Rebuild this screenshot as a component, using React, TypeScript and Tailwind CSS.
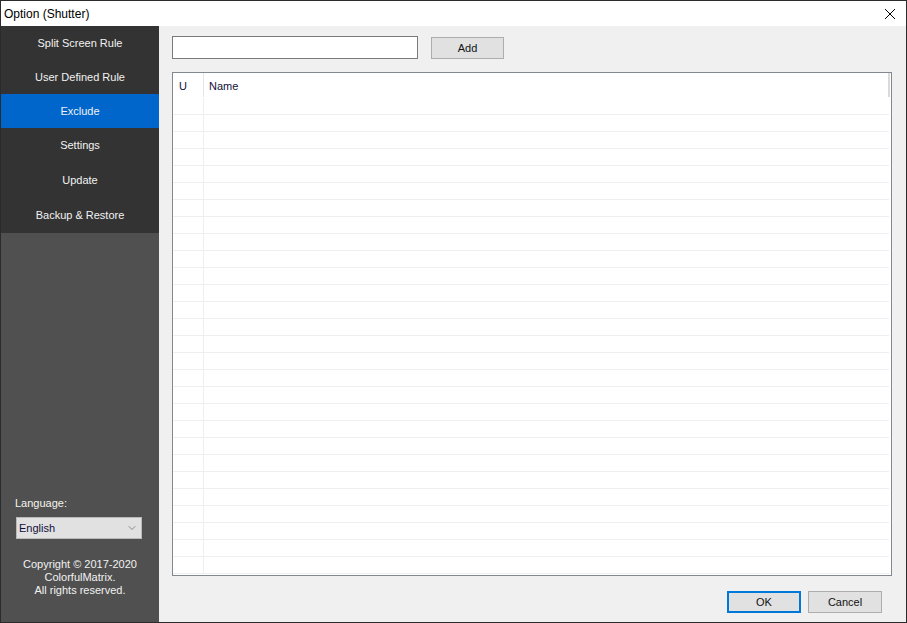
import { ChevronDown } from "lucide-react";

const menu = ["Split Screen Rule", "User Defined Rule", "Exclude", "Settings", "Update", "Backup & Restore"];
const heights = ["h-[34px]", "h-[34px]", "h-[34px]", "h-[34px]", "h-[36px]", "h-[35px]"];

export default function App() {
  const rows = Array.from({ length: 28 });

  return (
    <div className="w-[907px] h-[623px] border border-[#2b2b2b] flex flex-col bg-white overflow-hidden font-['Liberation_Sans',Arial,sans-serif] text-[11px] text-black">
      {/* title bar */}
      <div className="h-[25px] shrink-0 flex items-center justify-between bg-white">
        <span className="pl-[3px] text-[12px] text-black">Option (Shutter)</span>
        <svg width="12" height="12" viewBox="0 0 12 12" className="mr-[10px] mt-[1px]" fill="none" stroke="#000" strokeWidth="1">
          <path d="M1 1 11 11M11 1 1 11" />
        </svg>
      </div>

      <div className="flex flex-1 min-h-0">
        {/* sidebar */}
        <aside className="w-[158px] shrink-0 flex flex-col bg-[#505050]">
          <nav className="flex flex-col bg-[#333333]">
            {menu.map((label, i) => (
              <div
                key={label}
                className={`${heights[i]} flex items-center justify-center text-[#f2f2f2] ${label === "Exclude" ? "bg-[#0066cc]" : ""}`}
              >
                {label}
              </div>
            ))}
          </nav>

          <div className="flex-1 flex flex-col justify-end pb-[25px]">
            <div className="pl-[14px] text-[#f4f4ee] mb-[6px]">Language:</div>
            <div className="ml-[15px] w-[126px] h-[22px] border border-[#b9b9b9] bg-[#e1e1e1] flex items-center justify-between pl-[2px] pr-[3px] text-[#10103a] text-[11px]">
              <span>English</span>
              <ChevronDown size={12} strokeWidth={1.25} className="text-[#555]" />
            </div>
            <div className="mt-[19px] flex flex-col items-center leading-[13px] text-[#f2f2f2] text-[11px]">
              <span>Copyright © 2017-2020</span>
              <span>ColorfulMatrix.</span>
              <span>All rights reserved.</span>
            </div>
          </div>
        </aside>

        {/* content */}
        <main className="flex-1 flex flex-col bg-[#f0f0f0] pl-[13px] pr-[14px] pt-[10px] pb-[9px]">
          <div className="flex items-start gap-[13px]">
            <div className="w-[246px] h-[23px] bg-white border border-[#7a7a7a]" />
            <button className="mt-[1px] w-[73px] h-[22px] bg-[#e1e1e1] border border-[#adadad] text-[#111] text-[11px]">
              Add
            </button>
          </div>

          <div className="mt-[13px] w-[720px] h-[504px] border border-[#828790] bg-white overflow-hidden">
            <div className="h-[25px] flex items-start text-[#101038]">
              <div className="w-[31px] h-[24px] flex items-center pt-[2px] pl-[6px] border-r border-[#e5e5e5]">U</div>
              <div className="flex-1 h-[24px] flex items-center pt-[2px] pl-[5px] border-r-2 border-[#dadada] mr-[1px]">Name</div>
            </div>
            {rows.map((_, i) => (
              <div key={i} className="w-[716px] h-[17px] flex border-b border-[#efefef]">
                <div className="w-[31px] border-r border-[#efefef]" />
              </div>
            ))}
          </div>

          <div className="mt-auto mr-[10px] flex justify-end gap-[7px]">
            <button className="w-[74px] h-[22px] bg-[#e1e1e1] border-2 border-[#0078d7] text-[#111] text-[11px]">
              OK
            </button>
            <button className="w-[74px] h-[22px] bg-[#e1e1e1] border border-[#adadad] text-[#111] text-[11px]">
              Cancel
            </button>
          </div>
        </main>
      </div>
    </div>
  );
}
